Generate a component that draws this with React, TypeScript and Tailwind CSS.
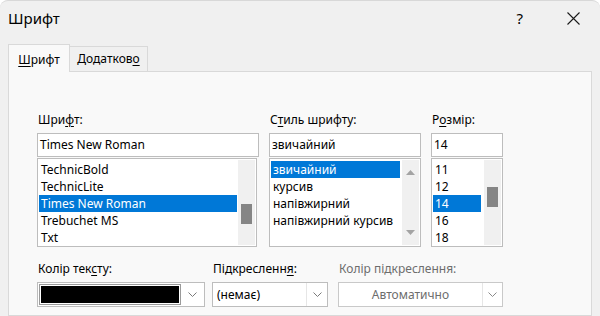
import React from 'react'

const FONT = { fontFamily: '"Segoe UI", "Noto Sans", "DejaVu Sans", sans-serif' }

function U({ children }: { children: React.ReactNode }) {
    return <span className="underline underline-offset-2">{children}</span>
}

function Chevron({ color = '#7a7a7a' }: { color?: string }) {
    return (
        <svg width="9" height="5" viewBox="0 0 9 5" fill="none">
            <path d="M0.5 0.5 L4.5 4.5 L8.5 0.5" stroke={color} strokeWidth="1" />
        </svg>
    )
}

function Triangle({ up }: { up?: boolean }) {
    return (
        <svg width="9" height="5" viewBox="0 0 9 5">
            <path d={up ? 'M0 5 L4.5 0 L9 5 Z' : 'M0 0 L4.5 5 L9 0 Z'} fill="#a3a3a3" />
        </svg>
    )
}

interface ListProps {
    items: string[]
    selected: number
    width: string
    selWidth: string
    thumb?: string
    arrows?: boolean
}

function ListBox({ items, selected, width, selWidth, thumb, arrows }: ListProps) {
    return (
        <div className={`${width} h-[89px] mt-[1px] bg-white border border-[#bdbdbd] flex overflow-hidden`}>
            <div className="flex-1 pt-[2px] pl-[1px] overflow-hidden">
                {items.map((it, i) => (
                    <div
                        key={it}
                        className={`h-[17px] leading-[17px] pl-[2px] whitespace-nowrap ${selWidth} ${i === selected ? 'bg-[#0078d7] text-white' : 'text-black'}`}
                    >
                        {it}
                    </div>
                ))}
            </div>
            <div className="w-[17px] my-[1px] mr-[1px] bg-[#f0f0f0] relative flex flex-col items-center justify-between py-[10px]">
                {arrows && (
                    <>
                        <Triangle up />
                        <Triangle />
                    </>
                )}
                {thumb && <div className={`absolute left-[3px] w-[11px] h-[20px] bg-[#858585] ${thumb}`} />}
            </div>
        </div>
    )
}

export default function App() {
    return (
        <div className="w-[600px] h-[316px] bg-white overflow-hidden text-[12px]" style={FONT}>
            <div className="w-[600px] h-[316px] bg-[#f0f0f0] rounded-t-[8px] border-t border-[#d8d8d8] flex flex-col">
                {/* Title bar */}
                <div className="h-[42px] flex items-start justify-between pl-[8px] pr-[20px] pt-[6px]">
                    <span className="text-[15px] text-black">Шрифт</span>
                    <div className="flex items-center gap-[44px] pt-[4px]">
                        <span className="text-[15px] text-black leading-none">?</span>
                        <svg width="13" height="13" viewBox="0 0 13 13">
                            <path d="M0.5 0.5 L12.5 12.5 M12.5 0.5 L0.5 12.5" stroke="#1a1a1a" strokeWidth="1.1" />
                        </svg>
                    </div>
                </div>

                {/* Tabs */}
                <div className="flex items-end px-[8px] h-[28px]">
                    <div className="w-[62px] h-[28px] bg-[#f9f9f9] border border-b-0 border-[#d9d9d9] flex items-center justify-center relative z-10 mb-[-1px]">
                        <span className="pt-[2px]"><U>Ш</U>рифт</span>
                    </div>
                    <div className="w-[78px] h-[25px] bg-[#f0f0f0] border border-l-0 border-b-0 border-[#d9d9d9] flex items-center justify-center">
                        <span>Додатков<U>о</U></span>
                    </div>
                </div>

                {/* Panel */}
                <div className="flex-1 mx-[8px] bg-[#f9f9f9] border border-[#d9d9d9] pl-[28px] pt-[40px]">
                    <div className="flex gap-[10px]">
                        <div className="flex flex-col">
                            <div className="h-[16px] leading-[16px] mb-[5px] pl-[1px]">Шри<U>ф</U>т:</div>
                            <div className="w-[222px] h-[24px] bg-white border border-[#bdbdbd] flex items-center pl-[2px]">Times New Roman</div>
                            <ListBox
                                items={['TechnicBold', 'TechnicLite', 'Times New Roman', 'Trebuchet MS', 'Txt']}
                                selected={2}
                                width="w-[220px]"
                                selWidth="w-[198px]"
                                thumb="top-[44px]"
                            />
                        </div>
                        <div className="flex flex-col">
                            <div className="h-[16px] leading-[16px] mb-[5px] pl-[1px]">С<U>т</U>иль шрифту:</div>
                            <div className="w-[152px] h-[24px] bg-white border border-[#bdbdbd] flex items-center pl-[2px]">звичайний</div>
                            <ListBox
                                items={['звичайний', 'курсив', 'напівжирний', 'напівжирний курсив']}
                                selected={0}
                                width="w-[152px]"
                                selWidth="w-[129px]"
                                arrows
                            />
                        </div>
                        <div className="flex flex-col">
                            <div className="h-[16px] leading-[16px] mb-[5px] pl-[1px]">Р<U>о</U>змір:</div>
                            <div className="w-[72px] h-[24px] bg-white border border-[#bdbdbd] flex items-center pl-[2px]">14</div>
                            <ListBox
                                items={['11', '12', '14', '16', '18']}
                                selected={2}
                                width="w-[72px]"
                                selWidth="w-[48px]"
                                thumb="top-[27px]"
                            />
                        </div>
                    </div>

                    {/* Bottom row */}
                    <div className="flex mt-[14px]">
                        <div className="flex flex-col w-[175px]">
                            <div className="h-[16px] leading-[16px] mb-[5px] pl-[1px]">Колір тек<U>с</U>ту:</div>
                            <div className="w-[168px] h-[25px] bg-white border border-[#bdbdbd] flex items-stretch">
                                <div className="flex-1 m-[1px] mr-0 border border-[#9a9a9a] p-[1px] bg-white">
                                    <div className="w-full h-full bg-black" />
                                </div>
                                <div className="w-[23px] flex items-center justify-center">
                                    <Chevron />
                                </div>
                            </div>
                        </div>
                        <div className="flex flex-col w-[126px]">
                            <div className="h-[16px] leading-[16px] mb-[5px] pl-[1px]">Підкресленн<U>я</U>:</div>
                            <div className="w-[116px] h-[25px] bg-white border border-[#bdbdbd] flex items-stretch">
                                <div className="flex-1 flex items-center pl-[4px]">(немає)</div>
                                <div className="w-[21px] flex items-center justify-center border-l border-[#e6e6e6]">
                                    <Chevron />
                                </div>
                            </div>
                        </div>
                        <div className="flex flex-col">
                            <div className="h-[16px] leading-[16px] mb-[5px] pl-[1px] text-[#6d6d6d]">Колір підкреслення:</div>
                            <div className="w-[165px] h-[25px] bg-white border border-[#c9c9c9] flex items-stretch">
                                <div className="flex-1 flex items-center justify-center text-[#6d6d6d]">Автоматично</div>
                                <div className="w-[20px] flex items-center justify-center border-l border-[#e6e6e6]">
                                    <Chevron color="#8a8a8a" />
                                </div>
                            </div>
                        </div>
                    </div>
                </div>
            </div>
        </div>
    )
}
